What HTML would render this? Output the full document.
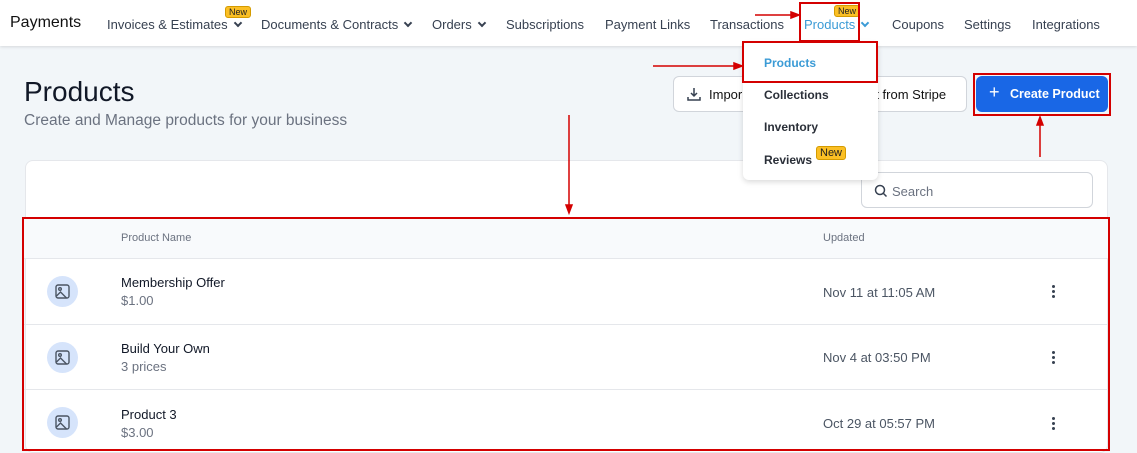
<!DOCTYPE html>
<html><head><style>
*{box-sizing:border-box;margin:0;padding:0}
body{width:1137px;height:453px;overflow:hidden;background:#f2f6f9;font-family:"Liberation Sans",sans-serif;position:relative;color:#111827}
.nav{position:absolute;left:0;top:0;width:1137px;height:46px;background:#fff;box-shadow:0 1px 3px rgba(0,0,0,.12)}
.nav span{position:absolute;top:17px;font-size:13px;color:#374151}
.chev{display:inline-block;width:6px;height:6px;border-right:2px solid #374151;border-bottom:2px solid #374151;transform:rotate(45deg);margin-left:7px;position:relative;top:-3px}
.new{position:absolute;background:#fbbf24;border:1px solid #d49b00;border-radius:3px;font-size:9px;padding:0 3px;color:#222;line-height:10px}
.abs{position:absolute}
.red{position:absolute;border:2px solid #d40000}
.card{position:absolute;left:25px;top:160px;width:1083px;height:293px;background:#fff;border-radius:8px;border:1px solid #e5e7eb}
.row{position:absolute;left:23px;width:1085px;border-top:1px solid #e5e7eb}
.ic{position:absolute;left:24px;width:31px;height:31px;border-radius:50%;background:#d6e4fb}
.nm{position:absolute;left:98px;font-size:13px;color:#111827}
.sb{position:absolute;left:98px;font-size:13px;color:#6b7280}
.dt{position:absolute;left:800px;font-size:13px;color:#4b5563}
.dots{position:absolute;left:1029px;width:3px}
.dots i{display:block;width:3px;height:3px;border-radius:50%;background:#374151;margin-bottom:2px}
.mi{position:absolute;left:21px;font-size:12px;font-weight:bold;color:#2a2f38}
</style></head><body>
<div class="nav">
<span style="left:10px;top:14px;font-size:16px;color:#111">Payments</span>
<span style="left:107px">Invoices &amp; Estimates<i class="chev"></i></span>
<div class="new" style="left:225px;top:6px">New</div>
<span style="left:261px">Documents &amp; Contracts<i class="chev"></i></span>
<span style="left:432px">Orders<i class="chev"></i></span>
<span style="left:506px">Subscriptions</span>
<span style="left:605px">Payment Links</span>
<span style="left:710px">Transactions</span>
<span style="left:804px;color:#3b9bd6">Products<i class="chev" style="border-color:#3b9bd6"></i></span>
<div class="new" style="left:834px;top:5px">New</div>
<span style="left:892px">Coupons</span>
<span style="left:964px">Settings</span>
<span style="left:1032px">Integrations</span>
</div>
<div class="red" style="left:799px;top:2px;width:61px;height:40px"></div>
<div class="abs" style="left:24px;top:76px;font-size:28px;color:#111827">Products</div>
<div class="abs" style="left:24px;top:112px;font-size:15.5px;color:#6b7280">Create and Manage products for your business</div>
<div class="abs" style="left:673px;top:76px;width:294px;height:36px;background:#fff;border:1px solid #d1d5db;border-radius:6px;font-size:13px;padding:10px 0 0 35px;color:#111">Impor<span style="position:absolute;left:197px">rt from Stripe</span>
<svg style="position:absolute;left:13px;top:10px" width="14" height="14" viewBox="0 0 14 14" fill="none" stroke="#374151" stroke-width="1.5"><path d="M7 1v8M4 6l3 3 3-3M1 10v3h12v-3"/></svg></div>
<div class="abs" style="left:976px;top:76px;width:132px;height:36px;background:#1967e6;border-radius:6px;color:#fff;font-size:12.5px;font-weight:bold;padding:11px 0 0 34px;white-space:nowrap"><span style="position:absolute;left:13px;top:6px;font-size:18px;font-weight:normal">+</span>Create Product</div>
<div class="red" style="left:973px;top:73px;width:138px;height:43px"></div>
<div class="card"></div>
<div class="abs" style="left:861px;top:172px;width:232px;height:36px;border:1px solid #d1d5db;border-radius:6px;background:#fff;font-size:13px;color:#6b7280;padding:11px 0 0 30px">Search
<svg style="position:absolute;left:12px;top:11px" width="14" height="14" viewBox="0 0 14 14" fill="none" stroke="#374151" stroke-width="1.5"><circle cx="6" cy="6" r="4.5"/><path d="M9.5 9.5l3 3"/></svg></div>
<div class="abs" style="left:23px;top:219px;width:1085px;height:40px;background:#f8fafc"></div>
<div class="abs" style="left:121px;top:232px;font-size:11px;color:#6b7280">Product Name</div>
<div class="abs" style="left:823px;top:232px;font-size:11px;color:#6b7280">Updated</div>
<div class="row" style="top:258px;height:66px"><div class="ic" style="top:17px"><svg style="margin:8px" width="15" height="15" viewBox="0 0 15 15" fill="none" stroke="#4b5563" stroke-width="1.4"><rect x="1" y="1" width="13" height="13" rx="2"/><circle cx="5" cy="5" r="1.3"/><path d="M1.5 12l4-4 6 6"/></svg></div><div class="nm" style="top:16px">Membership Offer</div><div class="sb" style="top:34px">$1.00</div><div class="dt" style="top:26px">Nov 11 at 11:05 AM</div><div class="dots" style="top:26px"><i></i><i></i><i></i></div></div>
<div class="row" style="top:324px;height:65px"><div class="ic" style="top:17px"><svg style="margin:8px" width="15" height="15" viewBox="0 0 15 15" fill="none" stroke="#4b5563" stroke-width="1.4"><rect x="1" y="1" width="13" height="13" rx="2"/><circle cx="5" cy="5" r="1.3"/><path d="M1.5 12l4-4 6 6"/></svg></div><div class="nm" style="top:16px">Build Your Own</div><div class="sb" style="top:34px">3 prices</div><div class="dt" style="top:25px">Nov 4 at 03:50 PM</div><div class="dots" style="top:26px"><i></i><i></i><i></i></div></div>
<div class="row" style="top:389px;height:64px"><div class="ic" style="top:17px"><svg style="margin:8px" width="15" height="15" viewBox="0 0 15 15" fill="none" stroke="#4b5563" stroke-width="1.4"><rect x="1" y="1" width="13" height="13" rx="2"/><circle cx="5" cy="5" r="1.3"/><path d="M1.5 12l4-4 6 6"/></svg></div><div class="nm" style="top:17px">Product 3</div><div class="sb" style="top:35px">$3.00</div><div class="dt" style="top:26px">Oct 29 at 05:57 PM</div><div class="dots" style="top:27px"><i></i><i></i><i></i></div></div>
<div class="red" style="left:22px;top:217px;width:1088px;height:234px"></div>
<div class="abs" style="left:743px;top:42px;width:135px;height:138px;background:#fff;border-radius:6px;box-shadow:0 2px 6px rgba(0,0,0,.15)">
<div class="mi" style="top:14px;color:#3b9bd6">Products</div>
<div class="mi" style="top:46px">Collections</div>
<div class="mi" style="top:78px">Inventory</div>
<div class="mi" style="top:111px">Reviews</div>
<div class="new" style="left:73px;top:104px;font-size:11px;line-height:12px">New</div>
</div>
<div class="red" style="left:742px;top:41px;width:136px;height:42px"></div>
<svg class="abs" style="left:0;top:0" width="1137" height="453"><g stroke="#d40000" stroke-width="1.5" fill="#d40000">
<line x1="755" y1="15" x2="793" y2="15"/><path d="M799 15l-8-3v6z"/>
<line x1="653" y1="66" x2="736" y2="66"/><path d="M742 66l-8-3v6z"/>
<line x1="569" y1="115" x2="569" y2="207"/><path d="M569 213l-3-8h6z"/>
<line x1="1040" y1="157" x2="1040" y2="123"/><path d="M1040 117l-3 8h6z"/>
</g></svg>
</body></html>
